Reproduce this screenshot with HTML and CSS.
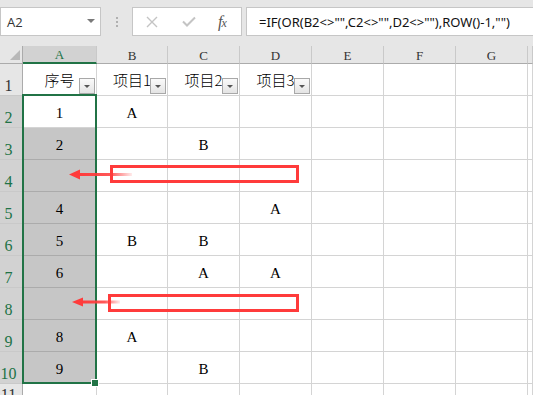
FILE: index.html
```html
<!DOCTYPE html>
<html>
<head>
<meta charset="utf-8">
<link rel="stylesheet" href="styles.css">
</head>
<body>
<div class="toolbar">
  <div class="namebox">
    <span class="nb-text">A2</span>
    <svg class="nb-arrow" width="8" height="4" viewBox="0 0 8 4"><path d="M0 0H8L4 4Z" fill="#7a7a7a"/></svg>
  </div>
  <div class="grip"><i></i><i></i><i></i></div>
  <div class="fbuttons">
    <svg class="fb-icon" width="12" height="12" viewBox="0 0 12 12"><path d="M1 1L11 11M11 1L1 11" stroke="#c4c4c4" stroke-width="1.4" fill="none"/></svg>
    <svg class="fb-icon" width="14" height="11" viewBox="0 0 14 11"><path d="M1 5.5L5 9.5L13 1.5" stroke="#c4c4c4" stroke-width="2" fill="none"/></svg>
    <span class="fx"><i>f</i><span class="fx-x">x</span></span>
  </div>
  <div class="formula">=IF(OR(B2&lt;&gt;"",C2&lt;&gt;"",D2&lt;&gt;""),ROW()-1,"")</div>
</div>

<div class="sheet">
  <div class="corner"><svg width="10" height="10" viewBox="0 0 10 10"><path d="M10 0V10H0Z" fill="#b8b8b8"/></svg></div>
  <div class="ch ch-sel">A</div>
  <div class="ch">B</div>
  <div class="ch">C</div>
  <div class="ch">D</div>
  <div class="ch">E</div>
  <div class="ch">F</div>
  <div class="ch">G</div>
  <div class="ch"></div>

  <div class="rh">1</div>
  <div class="c hd">序号<span class="dd"></span></div>
  <div class="c hd">项目1<span class="dd"></span></div>
  <div class="c hd">项目2<span class="dd"></span></div>
  <div class="c hd">项目3<span class="dd"></span></div>
  <div class="c"></div><div class="c"></div><div class="c"></div><div class="c"></div>

  <div class="rh rh-sel">2</div>
  <div class="c active">1</div>
  <div class="c">A</div>
  <div class="c"></div>
  <div class="c"></div>
  <div class="c"></div><div class="c"></div><div class="c"></div><div class="c"></div>

  <div class="rh rh-sel">3</div>
  <div class="c s">2</div>
  <div class="c"></div>
  <div class="c">B</div>
  <div class="c"></div>
  <div class="c"></div><div class="c"></div><div class="c"></div><div class="c"></div>

  <div class="rh rh-sel">4</div>
  <div class="c s"></div>
  <div class="c"></div>
  <div class="c"></div>
  <div class="c"></div>
  <div class="c"></div><div class="c"></div><div class="c"></div><div class="c"></div>

  <div class="rh rh-sel">5</div>
  <div class="c s">4</div>
  <div class="c"></div>
  <div class="c"></div>
  <div class="c">A</div>
  <div class="c"></div><div class="c"></div><div class="c"></div><div class="c"></div>

  <div class="rh rh-sel">6</div>
  <div class="c s">5</div>
  <div class="c">B</div>
  <div class="c">B</div>
  <div class="c"></div>
  <div class="c"></div><div class="c"></div><div class="c"></div><div class="c"></div>

  <div class="rh rh-sel">7</div>
  <div class="c s">6</div>
  <div class="c"></div>
  <div class="c">A</div>
  <div class="c">A</div>
  <div class="c"></div><div class="c"></div><div class="c"></div><div class="c"></div>

  <div class="rh rh-sel">8</div>
  <div class="c s"></div>
  <div class="c"></div>
  <div class="c"></div>
  <div class="c"></div>
  <div class="c"></div><div class="c"></div><div class="c"></div><div class="c"></div>

  <div class="rh rh-sel">9</div>
  <div class="c s">8</div>
  <div class="c">A</div>
  <div class="c"></div>
  <div class="c"></div>
  <div class="c"></div><div class="c"></div><div class="c"></div><div class="c"></div>

  <div class="rh rh-sel">10</div>
  <div class="c s">9</div>
  <div class="c"></div>
  <div class="c">B</div>
  <div class="c"></div>
  <div class="c"></div><div class="c"></div><div class="c"></div><div class="c"></div>

  <div class="rh rh-last">11</div>
  <div class="c"></div>
  <div class="c"></div>
  <div class="c"></div>
  <div class="c"></div>
  <div class="c"></div><div class="c"></div><div class="c"></div><div class="c"></div>

  <div class="selection"><span class="handle"></span></div>
</div>

<svg class="annot" width="533" height="395" viewBox="0 0 533 395">
  <defs>
    <linearGradient id="fade1" gradientUnits="userSpaceOnUse" x1="78" y1="0" x2="132" y2="0">
      <stop offset="0" stop-color="#ff3b3b" stop-opacity="1"/>
      <stop offset="0.6" stop-color="#ff3b3b" stop-opacity="0.85"/>
      <stop offset="1" stop-color="#ff3b3b" stop-opacity="0.1"/>
    </linearGradient>
    <linearGradient id="fade2" gradientUnits="userSpaceOnUse" x1="82" y1="0" x2="120" y2="0">
      <stop offset="0" stop-color="#ff3b3b" stop-opacity="1"/>
      <stop offset="0.6" stop-color="#ff3b3b" stop-opacity="0.85"/>
      <stop offset="1" stop-color="#ff3b3b" stop-opacity="0.1"/>
    </linearGradient>
  </defs>
  <rect x="111.5" y="166.5" width="186" height="15" fill="none" stroke="#ff3b3b" stroke-width="3"/>
  <rect x="109.5" y="295.5" width="188" height="15" fill="none" stroke="#ff3b3b" stroke-width="3"/>
  <rect x="77" y="173" width="55" height="3" fill="url(#fade1)"/>
  <path d="M69 174.5L80 169.5V179.5Z" fill="#ff3b3b"/>
  <rect x="81" y="300.5" width="39" height="3" fill="url(#fade2)"/>
  <path d="M72 302L83 297.5V306.5Z" fill="#ff3b3b"/>
</svg>
</body>
</html>
```

FILE: styles.css
```css
* { box-sizing: border-box; }
html, body { margin: 0; padding: 0; }
body {
  width: 533px;
  height: 395px;
  overflow: hidden;
  background: #ffffff;
  position: relative;
  font-family: "Liberation Serif", serif;
}

/* ---------- formula toolbar ---------- */
.toolbar {
  height: 46px;
  background: #e6e6e6;
  display: flex;
  align-items: flex-start;
  padding-top: 7px;
  overflow: hidden;
}
.namebox {
  width: 101px;
  height: 29px;
  background: #fff;
  border: 1px solid #c6c6c6;
  display: flex;
  align-items: center;
  padding: 0 5px 0 6px;
  justify-content: space-between;
}
.nb-text {
  font-family: "Open Sans", "Noto Sans", sans-serif;
  font-size: 13px;
  color: #333;
}
.nb-arrow { margin-top: -2px; }
.grip {
  width: 31px;
  height: 29px;
  display: flex;
  flex-direction: column;
  align-items: center;
  justify-content: center;
  gap: 2px;
  padding-top: 1px;
}
.grip i {
  display: block;
  width: 2px;
  height: 2px;
  background: #b0b0b0;
}
.fbuttons {
  width: 110px;
  height: 29px;
  background: #fff;
  border: 1px solid #c6c6c6;
  display: flex;
  align-items: center;
  padding-left: 13px;
}
.fbuttons .fb-icon:first-child { margin-right: 24px; }
.fbuttons .fb-icon:nth-child(2) { margin-right: 22px; }
.fx {
  font-family: "Liberation Serif", serif;
  font-style: italic;
  color: #555;
  font-size: 15px;
  letter-spacing: -1px;
}
.fx i { font-size: 16px; }
.fx-x { font-size: 12px; }
.formula {
  flex: 1;
  margin-left: 4px;
  margin-right: -12px;
  height: 29px;
  background: #fff;
  border: 1px solid #c6c6c6;
  padding-left: 12px;
  display: flex;
  align-items: center;
  font-family: "Noto Sans", sans-serif;
  font-size: 13px;
  color: #111;
  white-space: nowrap;
}

/* ---------- sheet grid ---------- */
.sheet {
  position: relative;
  height: 349px;
  display: grid;
  grid-template-columns: 23px 74px 71px 72px 72px 72px 72px 72px 1fr;
  grid-template-rows: 18px repeat(10, 32px) 1fr;
  overflow: hidden;
}
.corner {
  background: #e6e6e6;
  border-right: 1px solid #ababab;
  border-bottom: 1px solid #ababab;
  display: flex;
  align-items: flex-end;
  justify-content: flex-end;
  padding: 0 2px 3px 0;
}
.ch {
  background: #e6e6e6;
  border-right: 1px solid #c9c9c9;
  border-bottom: 1px solid #ababab;
  display: flex;
  align-items: center;
  justify-content: center;
  padding-top: 2px;
  font-family: "Liberation Serif", serif;
  font-size: 13px;
  color: #333;
}
.ch-sel {
  background: #d2d2d2;
  color: #217346;
  border-bottom: 2px solid #217346;
}
.rh {
  background: #e6e6e6;
  border-right: 1px solid #ababab;
  border-bottom: 1px solid #c9c9c9;
  display: flex;
  align-items: flex-end;
  justify-content: center;
  padding-right: 5px;
  padding-bottom: 1px;
  font-family: "Liberation Serif", serif;
  font-size: 16px;
  line-height: 16px;
  color: #333;
}
.rh-sel {
  background: #d2d2d2;
  color: #217346;
}
.rh-last {
  align-items: flex-start;
  padding-top: 3px;
  padding-bottom: 0;
}
.c {
  position: relative;
  border-right: 1px solid #d4d4d4;
  border-bottom: 1px solid #d4d4d4;
  display: flex;
  align-items: center;
  justify-content: center;
  padding-top: 3px;
  font-family: "Liberation Serif", serif;
  font-size: 15px;
  color: #000;
}
.c.hd {
  padding-top: 0;
  font-family: "Noto Sans CJK SC", sans-serif;
  font-weight: 300;
  font-size: 15px;
}
.c.s {
  background: #c6c6c6;
  border-bottom-color: #ababab;
}
.c.active { background: #fff; }

/* filter dropdown button */
.dd {
  position: absolute;
  right: 1px;
  bottom: 1px;
  width: 16px;
  height: 16px;
  border: 1px solid #a8a8a8;
  background: linear-gradient(#fafafa, #e4e4e4);
}
.dd::after {
  content: "";
  position: absolute;
  left: 4px;
  top: 6px;
  border-left: 3px solid transparent;
  border-right: 3px solid transparent;
  border-top: 3px solid #555;
}

/* selection overlay */
.selection {
  position: absolute;
  left: 22px;
  top: 48px;
  width: 75px;
  height: 290px;
  border: 2px solid #217346;
  pointer-events: none;
}
.handle {
  position: absolute;
  left: 67px;
  top: 283px;
  width: 8px;
  height: 8px;
  background: #217346;
  border: 1px solid #fff;
}

/* annotations */
.annot {
  position: absolute;
  left: 0;
  top: 0;
  pointer-events: none;
}
```
